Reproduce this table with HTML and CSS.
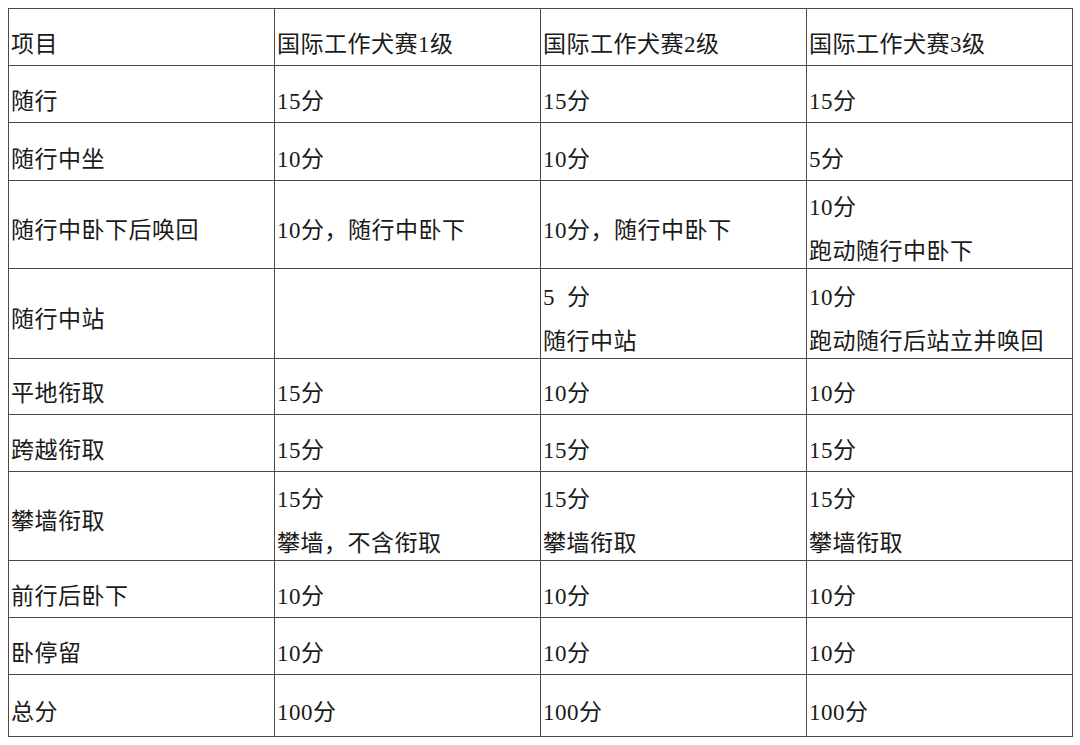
FILE: index.html
```html
<!DOCTYPE html>
<html lang="zh-CN">
<head>
<meta charset="utf-8">
<title>国际工作犬赛</title>
<link rel="stylesheet" href="styles.css">
</head>
<body>
<table class="score">
  <colgroup><col class="c"><col class="c"><col class="c"><col class="c"></colgroup>
  <tr class="r57"><td><span class="t">项目</span></td><td><span class="t">国际工作犬赛1级</span></td><td><span class="t">国际工作犬赛2级</span></td><td><span class="t">国际工作犬赛3级</span></td></tr>
  <tr class="r57"><td><span class="t">随行</span></td><td><span class="t">15分</span></td><td><span class="t">15分</span></td><td><span class="t">15分</span></td></tr>
  <tr class="r58"><td><span class="t">随行中坐</span></td><td><span class="t">10分</span></td><td><span class="t">10分</span></td><td><span class="t">5分</span></td></tr>
  <tr class="r88"><td class="mid">随行中卧下后唤回</td><td class="mid">10分，随行中卧下</td><td class="mid">10分，随行中卧下</td><td><span class="t2">10分<br>跑动随行中卧下</span></td></tr>
  <tr class="r90"><td class="mid">随行中站</td><td></td><td><span class="t2">5&#8194;分<br>随行中站</span></td><td><span class="t2">10分<br>跑动随行后站立并唤回</span></td></tr>
  <tr class="r56"><td><span class="t">平地衔取</span></td><td><span class="t">15分</span></td><td><span class="t">10分</span></td><td><span class="t">10分</span></td></tr>
  <tr class="r57"><td><span class="t">跨越衔取</span></td><td><span class="t">15分</span></td><td><span class="t">15分</span></td><td><span class="t">15分</span></td></tr>
  <tr class="r89"><td class="mid">攀墙衔取</td><td><span class="t2">15分<br>攀墙，不含衔取</span></td><td><span class="t2">15分<br>攀墙衔取</span></td><td><span class="t2">15分<br>攀墙衔取</span></td></tr>
  <tr class="r57"><td><span class="t">前行后卧下</span></td><td><span class="t">10分</span></td><td><span class="t">10分</span></td><td><span class="t">10分</span></td></tr>
  <tr class="r57"><td><span class="t">卧停留</span></td><td><span class="t">10分</span></td><td><span class="t">10分</span></td><td><span class="t">10分</span></td></tr>
  <tr class="r62"><td><span class="t">总分</span></td><td><span class="t">100分</span></td><td><span class="t">100分</span></td><td><span class="t">100分</span></td></tr>
</table>
</body>
</html>
```
FILE: styles.css
```css
html, body {
  margin: 0;
  padding: 0;
  background: #ffffff;
}
body {
  padding: 8px;
  font-family: "Liberation Serif", "Noto Sans CJK SC", serif;
  font-size: 23px;
  letter-spacing: 0.5px;
  color: #1a1a1a;
}
.score {
  border-collapse: collapse;
  table-layout: fixed;
  width: 1065px;
}
.score .c {
  width: 266px;
}
.score td {
  border: 1px solid #4a4a4a;
  padding: 0 2px 0 2px;
  line-height: 44px;
  vertical-align: bottom;
  white-space: nowrap;
  box-sizing: border-box;
}
.score td.mid {
  vertical-align: middle;
  padding-top: 12px;
}
.score .t {
  display: block;
  margin-bottom: -2px;
}
.score .t2 {
  display: block;
  margin-bottom: -6px;
}
.r62 .t {
  margin-bottom: 1px;
}
.r56 td { height: 56px; }
.r57 td { height: 57px; }
.r58 td { height: 58px; }
.r62 td { height: 62px; }
.r88 td { height: 88px; }
.r89 td { height: 89px; }
.r90 td { height: 90px; }
```
